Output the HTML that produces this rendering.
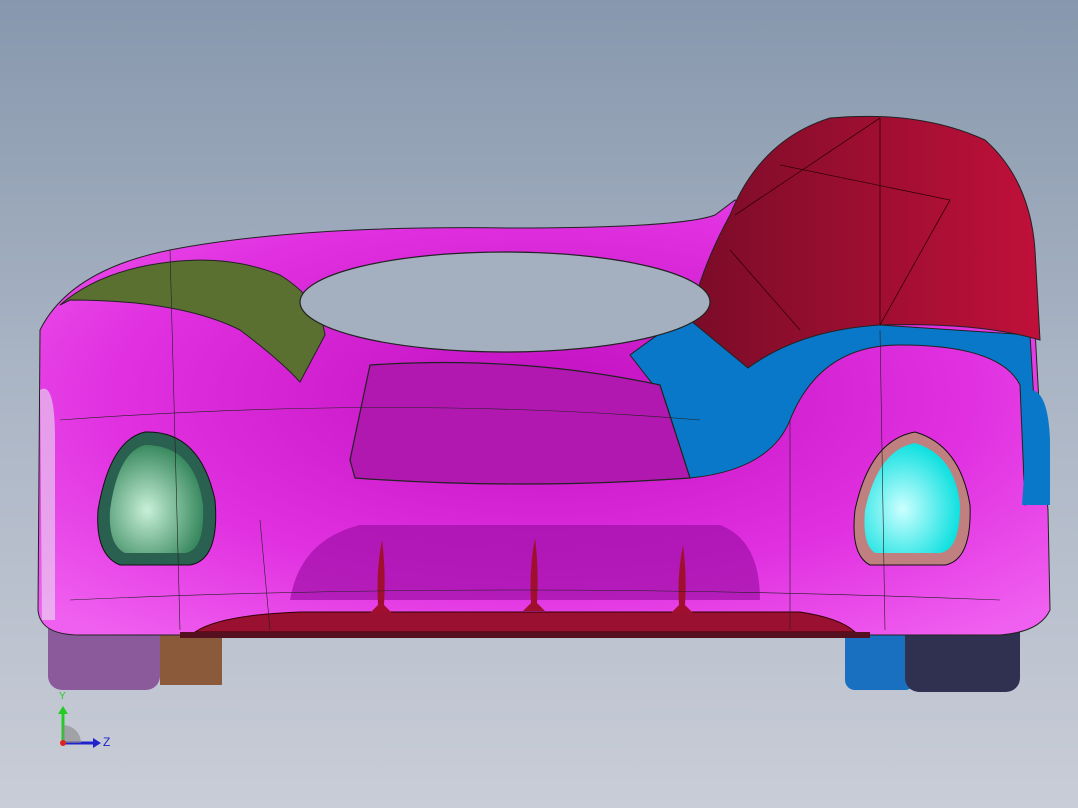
<!DOCTYPE html>
<html><head><style>
html,body{margin:0;padding:0;width:1078px;height:808px;overflow:hidden}
body{background:linear-gradient(#8797ad 0%,#a9b4c4 45%,#c9cdd7 100%)}
svg{position:absolute;left:0;top:0}
</style></head><body>
<svg width="1078" height="808" viewBox="0 0 1078 808">
<defs>
<linearGradient id="bg" x1="0" y1="0" x2="0" y2="1"><stop offset="0" stop-color="#8797ad"/><stop offset="1" stop-color="#c9cdd7"/></linearGradient>
<radialGradient id="mag" cx="0.5" cy="0.45" r="0.7"><stop offset="0" stop-color="#c010c0"/><stop offset="0.6" stop-color="#e030e0"/><stop offset="1" stop-color="#f060f0"/></radialGradient>
<linearGradient id="red" x1="0" y1="0" x2="1" y2="0"><stop offset="0" stop-color="#7a0c28"/><stop offset="1" stop-color="#c0103a"/></linearGradient>
<radialGradient id="cy" cx="0.4" cy="0.6" r="0.6"><stop offset="0" stop-color="#ccffff"/><stop offset="1" stop-color="#10e0e0"/></radialGradient>
<radialGradient id="gr" cx="0.4" cy="0.6" r="0.6"><stop offset="0" stop-color="#c8f0d8"/><stop offset="1" stop-color="#3a8a60"/></radialGradient>
</defs>
<!-- wheels -->
<rect x="48" y="600" width="112" height="90" rx="14" fill="#8a5a9a"/>
<rect x="160" y="620" width="62" height="65" fill="#8a5a3a"/>
<rect x="845" y="600" width="70" height="90" rx="10" fill="#1a70c0"/>
<rect x="905" y="600" width="115" height="92" rx="14" fill="#303050"/>
<!-- body -->
<path d="M40 330 Q70 270 170 250 Q300 225 510 228 Q680 228 715 215 L735 200 L1035 330 L1040 420 L1048 510 L1050 610 Q1040 632 1000 635 L80 635 Q40 635 38 610 Z" fill="url(#mag)" stroke="#222" stroke-width="1"/>
<!-- blue panel -->
<path d="M630 355 Q690 310 720 300 L880 325 L1030 335 L1040 500 L1025 505 L1020 385 Q1000 345 900 345 Q820 345 790 420 Q770 470 690 478 L665 400 Z" fill="#0a78c8" stroke="#222" stroke-width="1"/>
<!-- red dome -->
<path d="M690 320 Q700 270 730 215 Q760 140 830 118 Q920 110 985 140 Q1030 180 1035 250 L1040 340 Q980 322 880 325 Q800 330 748 368 Z" fill="url(#red)" stroke="#222" stroke-width="1"/>
<path d="M735 215 L880 118 M880 118 L880 325 M780 165 L950 200 L880 325 M730 250 L800 330" stroke="#300" stroke-width="0.8" fill="none"/>
<!-- green panel -->
<path d="M60 305 Q100 270 170 262 Q230 255 280 275 Q320 300 325 335 L300 382 Q280 360 240 330 Q180 300 70 300 Z" fill="#5a7030" stroke="#222" stroke-width="1"/>
<!-- windshield hole -->
<ellipse cx="505" cy="302" rx="205" ry="50" fill="#a4afbf" stroke="#222" stroke-width="1.2"/>
<!-- hood panel -->
<path d="M370 365 Q520 355 660 385 L690 478 Q520 490 355 478 L350 460 Z" fill="#b018b0" stroke="#222" stroke-width="1.2"/>
<!-- lower intake -->
<path d="M290 600 Q300 540 360 525 L720 525 Q760 540 760 600 Z" fill="#a010a8" opacity="0.7"/>
<!-- headlights -->
<path d="M145 432 Q200 430 215 500 Q220 560 190 565 L120 565 Q95 555 98 510 Q110 440 145 432 Z" fill="#2a6050" stroke="#111"/>
<path d="M145 445 Q195 445 203 505 Q205 550 185 553 L125 553 Q108 545 110 510 Q118 452 145 445 Z" fill="url(#gr)"/>
<path d="M915 432 Q960 445 970 505 Q972 560 945 565 L870 565 Q850 555 855 510 Q870 440 915 432 Z" fill="#c08080" stroke="#111"/>
<path d="M915 443 Q955 455 960 505 Q960 550 940 553 L875 553 Q862 545 865 510 Q878 450 915 443 Z" fill="url(#cy)"/>
<!-- side wheel arches -->
<path d="M40 390 Q55 380 55 440 L55 620 L42 620 Z" fill="#e8e0f0" opacity="0.6"/>
<path d="M1030 390 Q1048 390 1050 440 L1050 505 L1022 505 Z" fill="#0a78c8"/>
<!-- splitter -->
<path d="M195 632 Q220 615 300 612 L800 612 Q840 618 855 632 Z" fill="#9a1030" stroke="#300"/>
<rect x="180" y="632" width="690" height="6" fill="#551020"/>
<path d="M382 540 q-6 30 -4 65 l-8 8 h22 l-8 -8 q2 -35 -2 -65z M535 538 q-6 30 -4 65 l-8 8 h22 l-8 -8 q2 -35 -2 -65z M683 545 q-6 30 -4 60 l-8 8 h22 l-8 -8 q2 -30 -2 -60z" fill="#a0102e"/>
<!-- lines -->
<path d="M60 420 Q400 395 700 420 M170 250 L180 630 M260 520 L270 630 M790 420 L790 630 M880 330 L885 630 M70 600 Q500 580 1000 600" stroke="#222" stroke-width="0.6" fill="none"/>
<!-- axes -->
<line x1="63" y1="743" x2="63" y2="712" stroke="#2c2" stroke-width="3"/>
<polygon points="58,714 68,714 63,706" fill="#2c2"/>
<line x1="63" y1="743" x2="95" y2="743" stroke="#22c" stroke-width="3"/>
<polygon points="93,738 93,748 101,743" fill="#22c"/>
<path d="M63 743 L63 725 A18 18 0 0 1 81 743 Z" fill="#888" opacity="0.6"/>
<circle cx="63" cy="743" r="3" fill="#d22"/>
<text x="103" y="746" font-family="Liberation Sans,sans-serif" font-size="12" fill="#22c">Z</text>
<text x="59" y="699" font-family="Liberation Sans,sans-serif" font-size="10" fill="#2c2">Y</text>
</svg>
</body></html>
